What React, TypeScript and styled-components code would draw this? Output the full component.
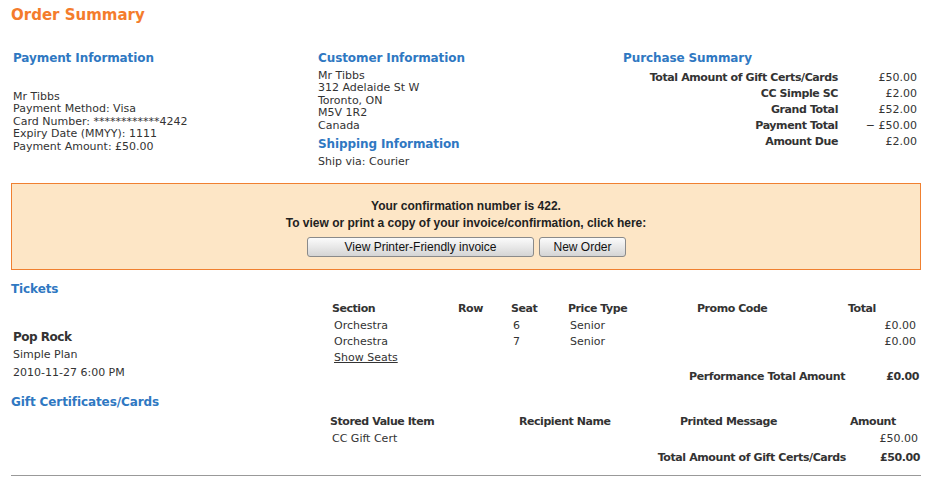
import React from "react";
import styled, { createGlobalStyle } from "styled-components";

const GlobalStyle = createGlobalStyle`
  body {
    margin: 0;
    background: #ffffff;
    font-family: "DejaVu Sans", Verdana, sans-serif;
    font-size: 11px;
    color: #333333;
  }
`;

const Page = styled.div`
  width: 910px;
  padding: 5px 0 0 11px;
`;

const Title = styled.h1`
  margin: 0;
  font-size: 15px;
  line-height: 20px;
  font-weight: bold;
  color: #f47c2c;
`;

const Heading = styled.h2`
  margin: 0;
  font-size: 12px;
  line-height: 18px;
  letter-spacing: -0.1px;
  font-weight: bold;
  color: #2f78c2;
`;

const InfoGrid = styled.div`
  display: grid;
  grid-template-columns: 305px 305px 300px;
  padding: 24px 0 0 2px;
`;

const InfoColumn = styled.div`
  display: flex;
  flex-direction: column;
`;

const Lines = styled.div<{ $top?: number }>`
  line-height: 12.4px;
  padding-top: ${(p) => p.$top ?? 3}px;
  margin-bottom: 3px;
`;

const SummaryTable = styled.table`
  border-collapse: collapse;
  margin-top: 2px;
  width: 294px;

  td {
    padding: 0;
    height: 16px;
    text-align: right;
    white-space: nowrap;
  }
  td:first-child {
    font-weight: bold;
    letter-spacing: -0.4px;
    width: 215px;
  }
`;

const Banner = styled.div`
  margin-top: 12px;
  border: 1px solid #f08030;
  background: #fde6c6;
  height: 87px;
  display: flex;
  flex-direction: column;
  align-items: center;
  padding-top: 14px;
  box-sizing: border-box;
  font-family: "Liberation Sans", Arial, sans-serif;
  font-weight: bold;
  font-size: 12px;
  color: #222222;
`;

const BannerLine = styled.div`
  line-height: 17px;
`;

const ButtonRow = styled.div`
  display: flex;
  gap: 5px;
  margin-top: 5px;
  padding-left: 1px;
`;

const Button = styled.button<{ $w: number }>`
  width: ${(p) => p.$w}px;
  height: 20px;
  border: 1px solid #8a8a8a;
  border-radius: 3px;
  background: linear-gradient(#fbfbfb, #e6e6e6 55%, #d4d4d4);
  font-family: "Liberation Sans", Arial, sans-serif;
  font-size: 12px;
  color: #111111;
  padding: 0;
`;

const Section = styled.div<{ $top: number }>`
  margin-top: ${(p) => p.$top}px;
`;

const SectionBody = styled.div<{ $aside: number }>`
  display: grid;
  grid-template-columns: ${(p) => p.$aside}px 1fr;
  align-items: start;
`;

const EventInfo = styled.div`
  display: flex;
  flex-direction: column;
  padding: 31px 0 0 2px;
`;

const EventName = styled.div`
  font-weight: bold;
  font-size: 12px;
  letter-spacing: -0.5px;
  line-height: 17px;
`;

const EventLine = styled.div`
  line-height: 17.5px;
`;

const DataTable = styled.table`
  border-collapse: collapse;
  table-layout: fixed;
  width: 100%;
  margin-top: 2px;

  th {
    text-align: left;
    font-weight: bold;
    letter-spacing: -0.45px;
    padding: 0;
    height: 17px;
    white-space: nowrap;
  }
  td {
    padding: 0 0 0 2px;
    height: 16px;
    white-space: nowrap;
  }
`;

const Cell = styled.td<{ $right?: number; $bold?: boolean }>`
  text-align: ${(p) => (p.$right !== undefined ? "right" : "left")};
  font-weight: ${(p) => (p.$bold ? "bold" : "normal")};
  letter-spacing: ${(p) => (p.$bold ? "-0.4px" : "normal")};
  &&& {
    padding-right: ${(p) => p.$right ?? 0}px;
  }
`;

const TotalRow = styled.tr`
  td {
    height: 22px;
  }
`;

const LinkText = styled.a`
  color: #333333;
  text-decoration: underline;
`;

const Rule = styled.hr`
  margin: 7px 0 0 0;
  border: none;
  border-top: 1px solid #999999;
  height: 0;
`;

const summary: [string, string][] = [
  ["Total Amount of Gift Certs/Cards", "£50.00"],
  ["CC Simple SC", "£2.00"],
  ["Grand Total", "£52.00"],
  ["Payment Total", "− £50.00"],
  ["Amount Due", "£2.00"],
];

const tickets = [
  { section: "Orchestra", row: "", seat: "6", price: "Senior", promo: "", total: "£0.00" },
  { section: "Orchestra", row: "", seat: "7", price: "Senior", promo: "", total: "£0.00" },
];

export default function App() {
  return (
    <>
      <GlobalStyle />
      <Page>
        <Title>Order Summary</Title>

        <InfoGrid>
          <InfoColumn>
            <Heading>Payment Information</Heading>
            <Lines $top={24}>
              <div>Mr Tibbs</div>
              <div>Payment Method: Visa</div>
              <div>Card Number: ************4242</div>
              <div>Expiry Date (MMYY): 1111</div>
              <div>Payment Amount: £50.00</div>
            </Lines>
          </InfoColumn>
          <InfoColumn>
            <Heading>Customer Information</Heading>
            <Lines>
              <div>Mr Tibbs</div>
              <div>312 Adelaide St W</div>
              <div>Toronto, ON</div>
              <div>M5V 1R2</div>
              <div>Canada</div>
            </Lines>
            <Heading>Shipping Information</Heading>
            <Lines>
              <div>Ship via: Courier</div>
            </Lines>
          </InfoColumn>
          <InfoColumn>
            <Heading>Purchase Summary</Heading>
            <SummaryTable>
              <tbody>
                {summary.map(([label, value]) => (
                  <tr key={label}>
                    <td>{label}</td>
                    <td>{value}</td>
                  </tr>
                ))}
              </tbody>
            </SummaryTable>
          </InfoColumn>
        </InfoGrid>

        <Banner>
          <BannerLine>Your confirmation number is 422.</BannerLine>
          <BannerLine>To view or print a copy of your invoice/confirmation, click here:</BannerLine>
          <ButtonRow>
            <Button $w={227}>View Printer-Friendly invoice</Button>
            <Button $w={87}>New Order</Button>
          </ButtonRow>
        </Banner>

        <Section $top={10}>
          <Heading>Tickets</Heading>
          <SectionBody $aside={321}>
            <EventInfo>
              <EventName>Pop Rock</EventName>
              <EventLine>Simple Plan</EventLine>
              <EventLine>2010-11-27 6:00 PM</EventLine>
            </EventInfo>
            <DataTable>
              <colgroup>
                <col style={{ width: 126 }} />
                <col style={{ width: 53 }} />
                <col style={{ width: 57 }} />
                <col style={{ width: 129 }} />
                <col style={{ width: 151 }} />
                <col style={{ width: 73 }} />
              </colgroup>
              <thead>
                <tr>
                  <th>Section</th>
                  <th>Row</th>
                  <th>Seat</th>
                  <th>Price Type</th>
                  <th>Promo Code</th>
                  <th>Total</th>
                </tr>
              </thead>
              <tbody>
                {tickets.map((t) => (
                  <tr key={t.seat}>
                    <Cell>{t.section}</Cell>
                    <Cell>{t.row}</Cell>
                    <Cell>{t.seat}</Cell>
                    <Cell>{t.price}</Cell>
                    <Cell>{t.promo}</Cell>
                    <Cell $right={5}>{t.total}</Cell>
                  </tr>
                ))}
                <tr>
                  <Cell colSpan={6}>
                    <LinkText>Show Seats</LinkText>
                  </Cell>
                </tr>
                <TotalRow>
                  <Cell colSpan={5} $right={3} $bold>
                    Performance Total Amount
                  </Cell>
                  <Cell $right={2} $bold>
                    £0.00
                  </Cell>
                </TotalRow>
              </tbody>
            </DataTable>
          </SectionBody>
        </Section>

        <Section $top={6}>
          <Heading>Gift Certificates/Cards</Heading>
          <SectionBody $aside={319}>
            <div />
            <DataTable>
              <colgroup>
                <col style={{ width: 189 }} />
                <col style={{ width: 161 }} />
                <col style={{ width: 170 }} />
                <col style={{ width: 71 }} />
              </colgroup>
              <thead>
                <tr>
                  <th>Stored Value Item</th>
                  <th>Recipient Name</th>
                  <th>Printed Message</th>
                  <th>Amount</th>
                </tr>
              </thead>
              <tbody>
                <tr>
                  <Cell>CC Gift Cert</Cell>
                  <Cell />
                  <Cell />
                  <Cell $right={3}>£50.00</Cell>
                </tr>
                <TotalRow>
                  <Cell colSpan={3} $right={4} $bold>
                    Total Amount of Gift Certs/Cards
                  </Cell>
                  <Cell $right={1} $bold>
                    £50.00
                  </Cell>
                </TotalRow>
              </tbody>
            </DataTable>
          </SectionBody>
        </Section>

        <Rule />
      </Page>
    </>
  );
}
